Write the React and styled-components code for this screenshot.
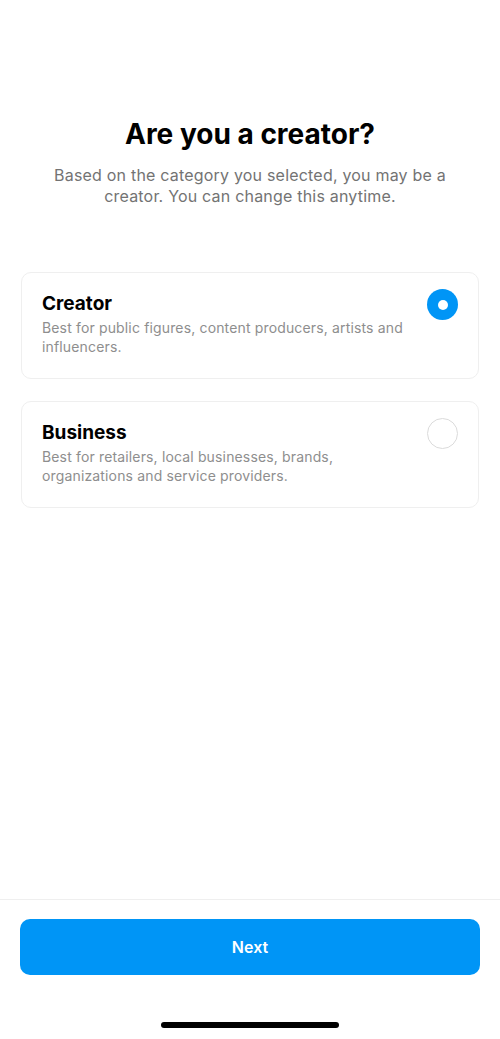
import React, { useState } from 'react'
import styled, { createGlobalStyle } from 'styled-components'

const GlobalStyle = createGlobalStyle`
  html, body {
    margin: 0;
    padding: 0;
    background: #ffffff;
  }
  body {
    font-family: Inter, "Liberation Sans", Arial, sans-serif;
    -webkit-font-smoothing: antialiased;
  }
`

const Screen = styled.div`
  height: 1039px;
  display: flex;
  flex-direction: column;
  background: #ffffff;
`

const Main = styled.main`
  flex: 1;
  display: flex;
  flex-direction: column;
  padding: 117px 21px 0;
`

const Title = styled.h1`
  margin: 0;
  text-align: center;
  font-size: 28px;
  line-height: 34px;
  font-weight: 700;
  letter-spacing: 0;
  color: #000000;
`

const Subtitle = styled.p`
  margin: 14px 20px 0;
  text-align: center;
  font-size: 16px;
  line-height: 21px;
  letter-spacing: 0.2px;
  color: #737373;
`

const Options = styled.div`
  margin-top: 65px;
  display: flex;
  flex-direction: column;
  gap: 22px;
`

const Card = styled.button`
  display: flex;
  align-items: flex-start;
  justify-content: space-between;
  gap: 16px;
  width: 100%;
  min-height: 107px;
  padding: 19px 20px 20px;
  border: 1px solid #efefef;
  border-radius: 10px;
  background: #ffffff;
  text-align: left;
  font-family: inherit;
  cursor: pointer;
`

const CardText = styled.div`
  display: flex;
  flex-direction: column;
  gap: 2px;
`

const CardTitle = styled.div`
  font-size: 19px;
  line-height: 24px;
  font-weight: 700;
  color: #000000;
`

const CardDesc = styled.div`
  font-size: 14px;
  line-height: 19px;
  letter-spacing: 0.15px;
  color: #8e8e8e;
  max-width: ${p => p.$width}px;
`

const Radio = styled.span`
  flex: none;
  width: 31px;
  height: 31px;
  margin-top: -3px;
  border-radius: 50%;
  box-sizing: border-box;
  display: flex;
  align-items: center;
  justify-content: center;
  background: ${p => (p.$checked ? '#0095f6' : '#ffffff')};
  border: ${p => (p.$checked ? 'none' : '1.5px solid #dbdbdb')};

  &::after {
    content: '';
    display: ${p => (p.$checked ? 'block' : 'none')};
    width: 10px;
    height: 10px;
    border-radius: 50%;
    background: #ffffff;
  }
`

const Footer = styled.footer`
  border-top: 1px solid #efefef;
  padding: 19px 20px 0;
  height: 140px;
  box-sizing: border-box;
  display: flex;
  flex-direction: column;
  align-items: center;
`

const NextButton = styled.button`
  width: 100%;
  height: 56px;
  border: none;
  border-radius: 10px;
  background: #0095f6;
  color: #ffffff;
  font-family: inherit;
  font-size: 16px;
  font-weight: 600;
  cursor: pointer;
`

const HomeIndicator = styled.div`
  margin-top: 47px;
  width: 178px;
  height: 6px;
  border-radius: 3px;
  background: #000000;
`

const options = [
  {
    id: 'creator',
    title: 'Creator',
    desc: 'Best for public figures, content producers, artists and influencers.',
    width: 370,
  },
  {
    id: 'business',
    title: 'Business',
    desc: 'Best for retailers, local businesses, brands, organizations and service providers.',
    width: 300,
  },
]

const App = () => {
  const [selected, setSelected] = useState('creator')

  return (
    <Screen>
      <GlobalStyle />
      <Main>
        <Title>Are you a creator?</Title>
        <Subtitle>
          Based on the category you selected, you may be a creator. You can
          change this anytime.
        </Subtitle>
        <Options>
          {options.map(o => (
            <Card key={o.id} onClick={() => setSelected(o.id)}>
              <CardText>
                <CardTitle>{o.title}</CardTitle>
                <CardDesc $width={o.width}>{o.desc}</CardDesc>
              </CardText>
              <Radio $checked={selected === o.id} />
            </Card>
          ))}
        </Options>
      </Main>
      <Footer>
        <NextButton>Next</NextButton>
        <HomeIndicator />
      </Footer>
    </Screen>
  )
}

export default App
